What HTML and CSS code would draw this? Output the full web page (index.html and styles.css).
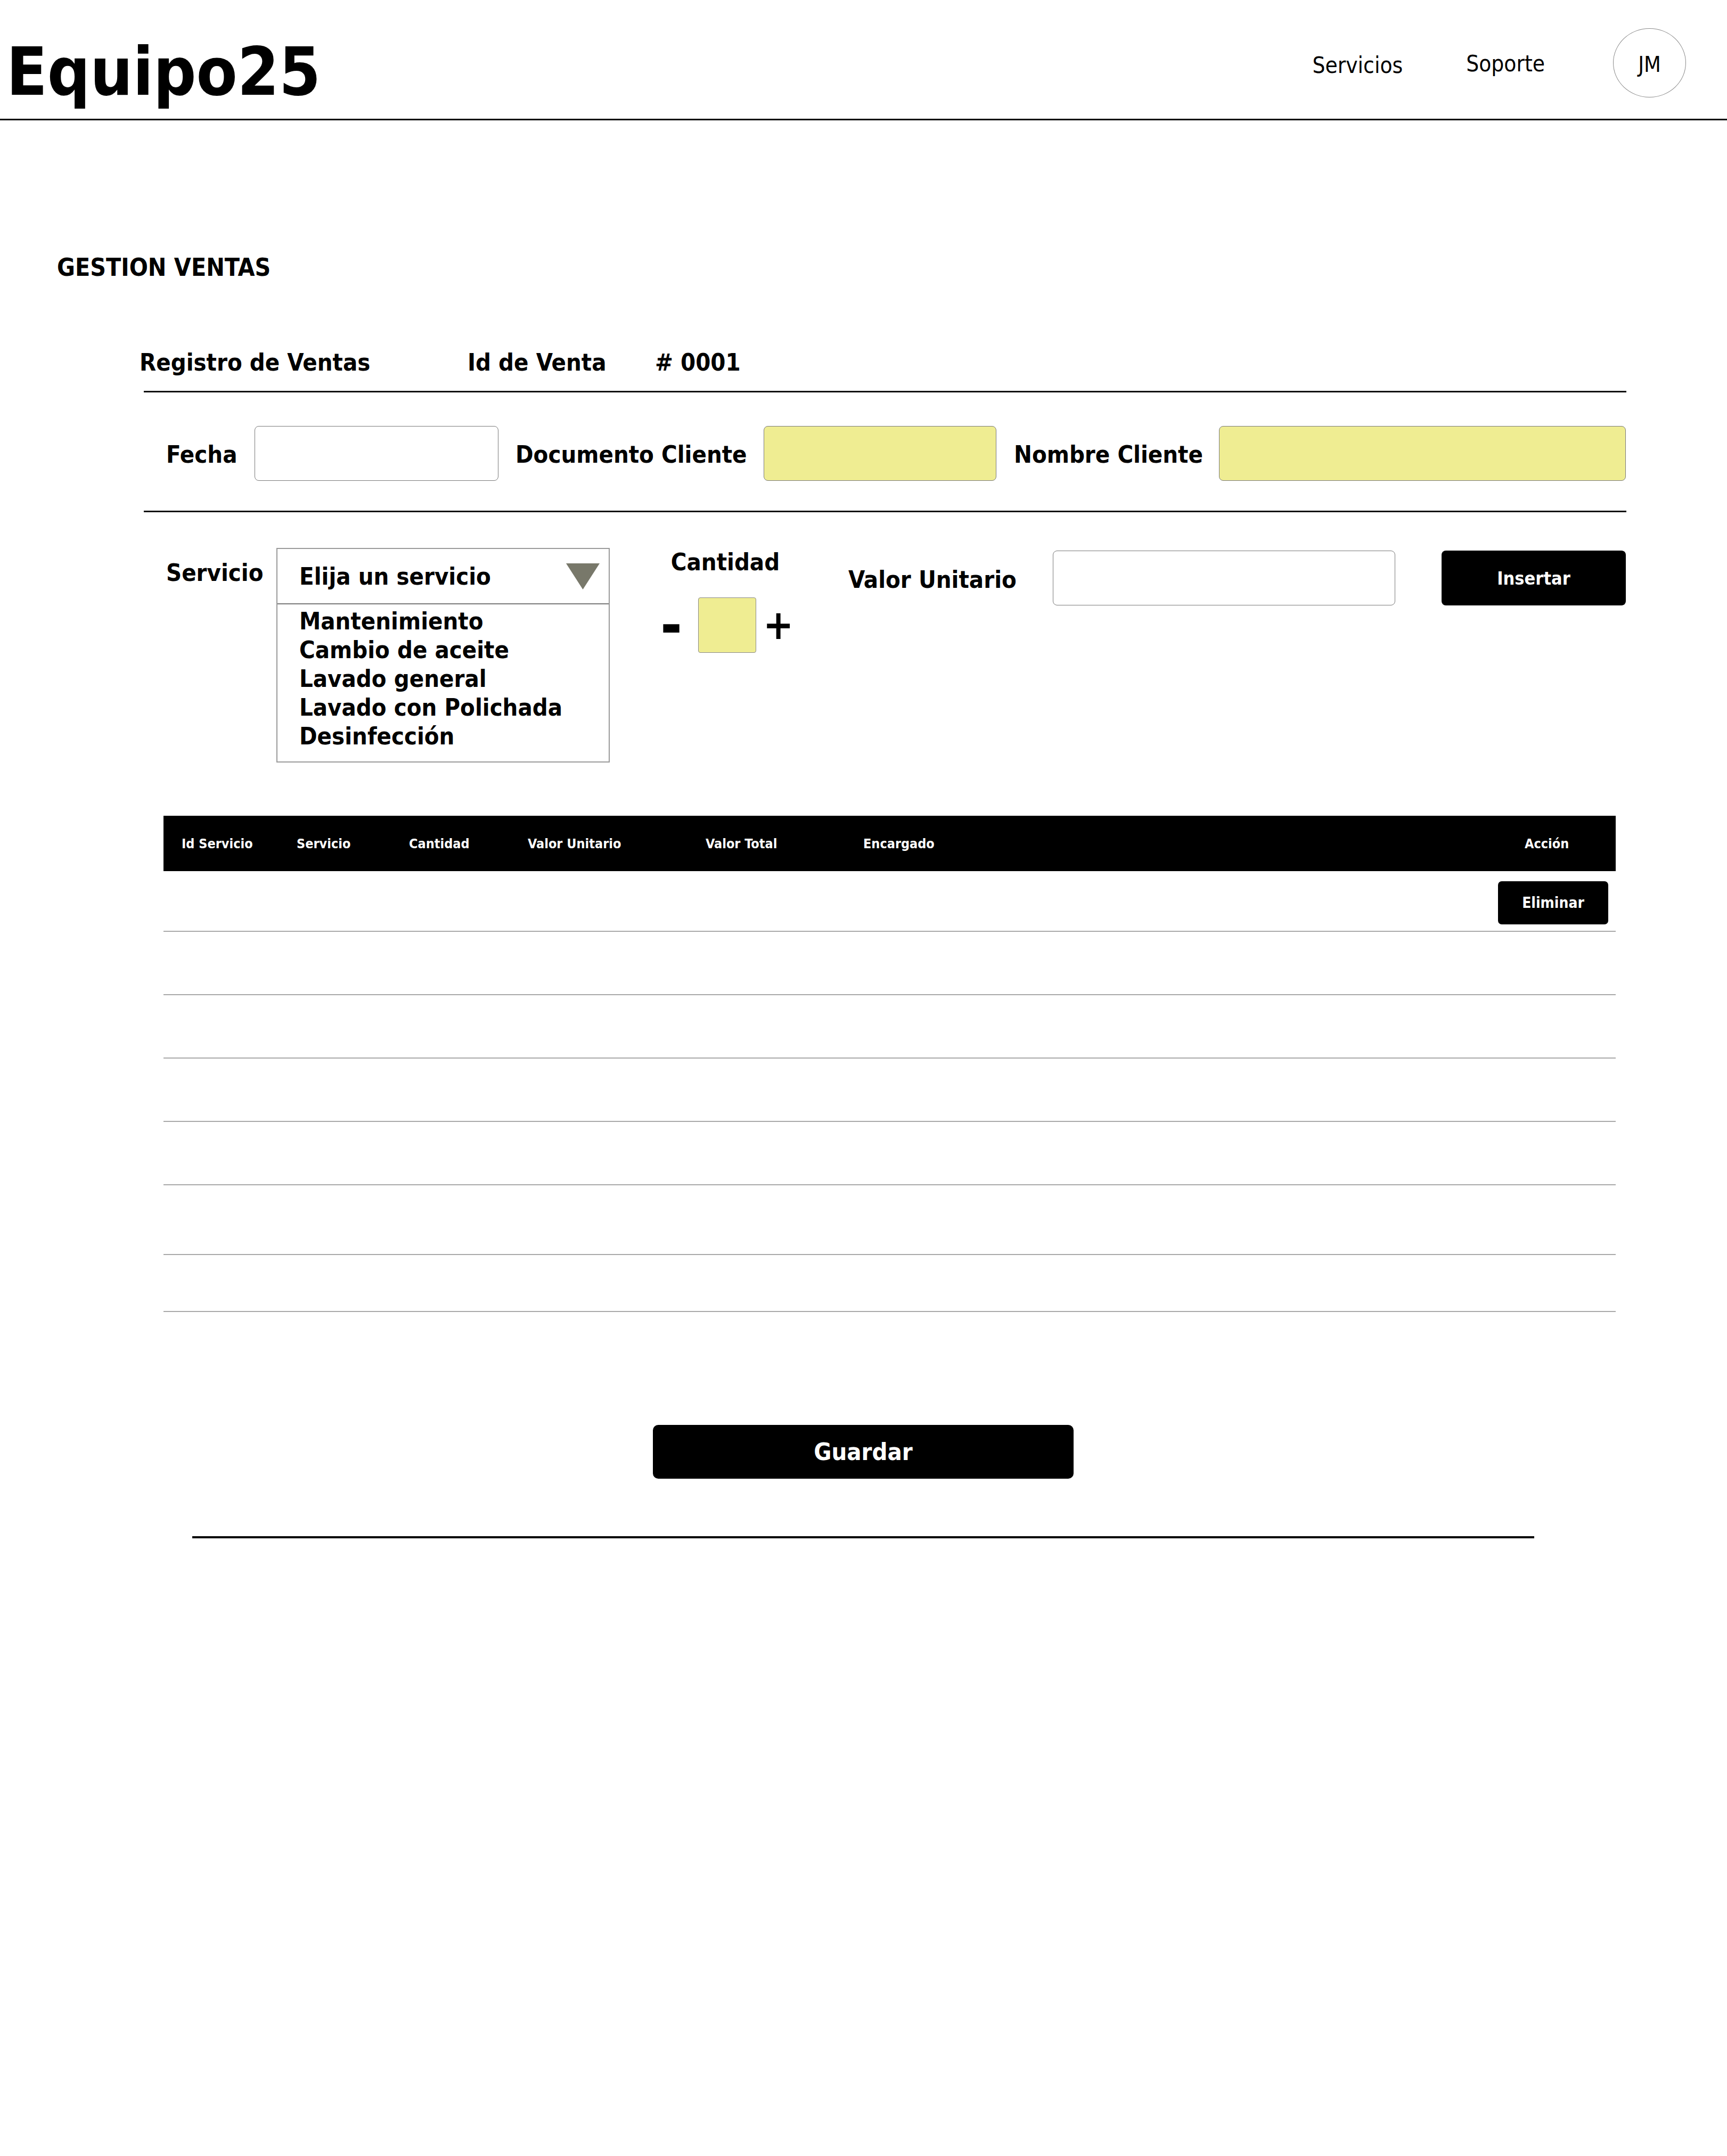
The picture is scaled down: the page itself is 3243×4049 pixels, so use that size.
FILE: index.html
```html
<!DOCTYPE html>
<html lang="es">
<head>
<meta charset="utf-8">
<title>Equipo25 - Gestion Ventas</title>
<link rel="stylesheet" href="styles.css">
</head>
<body>
<header class="topbar">
  <div class="logo">Equipo25</div>
  <nav class="nav">
    <a class="nav-link nav-servicios">Servicios</a>
    <a class="nav-link nav-soporte">Soporte</a>
    <div class="avatar">JM</div>
  </nav>
</header>
<main class="content">
  <h1 class="page-title">GESTION VENTAS</h1>
  <section class="card">
    <div class="card-head">
      <span>Registro de Ventas</span>
      <span>Id de Venta</span>
      <span># 0001</span>
    </div>
    <hr class="rule">
    <div class="row-client">
      <label class="label lbl-fecha">Fecha</label>
      <input class="field field-fecha" type="text">
      <label class="label lbl-doc">Documento Cliente</label>
      <input class="field field-doc" type="text">
      <label class="label lbl-nombre">Nombre Cliente</label>
      <input class="field field-nombre" type="text">
    </div>
    <hr class="rule rule-2">
    <div class="row-service">
      <label class="label lbl-servicio">Servicio</label>
      <div class="select">
        <div class="select-head">
          <span>Elija un servicio</span>
          <svg class="caret" viewBox="0 0 63 49"><polygon points="0,0 63,0 31.5,49" fill="#78786a"/></svg>
        </div>
        <ul class="options">
          <li>Mantenimiento</li>
          <li>Cambio de aceite</li>
          <li>Lavado general</li>
          <li>Lavado con Polichada</li>
          <li>Desinfección</li>
        </ul>
      </div>
      <div class="qty-group">
        <div class="label qty-title">Cantidad</div>
        <div class="qty-row">
          <span class="qty-minus">-</span>
          <div class="qty-box"></div>
          <span class="qty-plus">+</span>
        </div>
      </div>
      <label class="label lbl-valor">Valor Unitario</label>
      <input class="field field-valor" type="text">
      <button class="btn-insert">Insertar</button>
    </div>
    <div class="table">
      <div class="t-head">
        <span>Id Servicio</span>
        <span>Servicio</span>
        <span>Cantidad</span>
        <span>Valor Unitario</span>
        <span>Valor Total</span>
        <span>Encargado</span>
        <span>Acción</span>
      </div>
      <div class="t-body">
        <div class="t-row">
          <div class="t-action"><button class="btn-delete">Eliminar</button></div>
        </div>
        <div class="t-row"></div>
        <div class="t-row"></div>
        <div class="t-row"></div>
        <div class="t-row"></div>
        <div class="t-row"></div>
        <div class="t-row"></div>
      </div>
    </div>
    <button class="btn-save">Guardar</button>
    <hr class="rule-bottom">
  </section>
</main>
</body>
</html>
```

FILE: styles.css
```css
* { box-sizing: border-box; }

body {
  margin: 0;
  font-family: "DejaVu Sans Condensed", "DejaVu Sans", sans-serif;
  font-stretch: condensed;
  color: #000;
  background: #fff;
}

/* ---------- header ---------- */
.topbar {
  display: flex;
  align-items: flex-start;
  height: 226px;
  border-bottom: 3px solid #000;
}
.logo {
  margin: 72px 0 0 12px;
  font-size: 125px;
  line-height: 125px;
  font-weight: 700;
}
.nav {
  margin-left: auto;
  margin-right: 77px;
  display: flex;
  align-items: flex-start;
}
.nav-link {
  font-size: 42px;
  line-height: 42px;
  color: #000;
}
.nav-servicios { margin-top: 102px; }
.nav-soporte { margin-top: 99px; margin-left: 119px; }
.avatar {
  margin-top: 53px;
  margin-left: 128px;
  width: 137px;
  height: 130px;
  border: 1px solid #8a8a8a;
  border-radius: 50%;
  display: flex;
  align-items: center;
  justify-content: center;
  padding-top: 6px;
  font-size: 41px;
  line-height: 41px;
}

/* ---------- page ---------- */
.page-title {
  margin: 254px 0 0 107px;
  font-size: 46px;
  line-height: 45px;
  font-weight: 700;
}
.card {
  margin-left: 262px;
  width: 2792px;
}
.card-head {
  margin-top: 133px;
  display: grid;
  grid-template-columns: 616px 352px auto;
  font-size: 45px;
  line-height: 45px;
  font-weight: 700;
}
.rule {
  margin: 31px 0 0 8px;
  height: 0;
  border: 0;
  border-top: 3px solid #111;
}
.rule-2 { margin-top: 56px; }

.label {
  flex: none;
  font-size: 45px;
  line-height: 45px;
  font-weight: 700;
}
.field {
  flex: none;
  height: 103px;
  border: 1px solid #7b7b7b;
  border-radius: 8px;
  background: #fff;
}

.row-client {
  margin-top: 63px;
  height: 103px;
  display: flex;
  align-items: center;
  padding-left: 50px;
}
.row-client .label { margin-top: 4px; }
.lbl-fecha { width: 166px; }
.field-fecha { width: 458px; }
.lbl-doc { margin-left: 32px; width: 466px; }
.field-doc { width: 437px; background: #efed92; }
.lbl-nombre { margin-left: 33px; width: 385px; }
.field-nombre { width: 764px; background: #efed92; }

/* ---------- service row ---------- */
.row-service {
  margin-top: 67px;
  display: flex;
  align-items: flex-start;
  padding-left: 50px;
}
.lbl-servicio { margin-top: 24px; width: 207px; }
.select {
  flex: none;
  width: 626px;
  height: 403px;
  border: 2px solid #9a9a9a;
}
.select-head {
  height: 104px;
  border-bottom: 2px solid #7a7a7a;
  display: flex;
  align-items: center;
  justify-content: space-between;
  padding: 0 17px 0 41px;
  font-size: 45px;
  line-height: 45px;
  font-weight: 700;
}
.caret { width: 63px; height: 49px; }
.options {
  list-style: none;
  margin: 0;
  padding: 5px 0 0 41px;
  font-size: 45px;
  line-height: 54px;
  font-weight: 700;
}

.qty-group {
  flex: none;
  margin-left: 100px;
  width: 240px;
  display: flex;
  flex-direction: column;
  align-items: center;
}
.qty-title { margin-top: 4px; margin-left: -6px; }
.qty-row {
  align-self: flex-start;
  margin-top: 44px;
  margin-left: -5px;
  display: flex;
  align-items: center;
}
.qty-minus {
  font-size: 110px;
  line-height: 104px;
  font-weight: 700;
  margin-right: 30px;
}
.qty-box {
  width: 109px;
  height: 104px;
  border: 1px solid #8a8a8a;
  border-radius: 4px;
  background: #efed92;
}
.qty-plus {
  font-size: 76px;
  line-height: 76px;
  font-weight: 700;
  margin-left: 13px;
}

.lbl-valor { margin-left: 108px; margin-top: 37px; width: 384px; }
.field-valor { margin-top: 5px; width: 643px; }
.btn-insert {
  flex: none;
  margin: 5px 0 0 87px;
  width: 346px;
  height: 103px;
  border: 0;
  border-radius: 8px;
  background: #000;
  color: #fff;
  font-family: inherit;
  font-stretch: condensed;
  font-size: 34px;
  font-weight: 700;
}

/* ---------- table ---------- */
.table {
  margin: 100px 0 0 45px;
  width: 2727px;
}
.t-head,
.t-row {
  display: grid;
  grid-template-columns: 250px 211px 223px 334px 296px 1242px 171px;
}
.t-head {
  height: 104px;
  background: #000;
  color: #fff;
  align-items: center;
  font-size: 25px;
  font-weight: 700;
}
.t-head span:first-child { padding-left: 34px; }
.t-row {
  height: 119px;
  border-bottom: 2px solid #a9a9a9;
}
.t-body .t-row:nth-child(1) { height: 114px; }
.t-body .t-row:nth-child(6) { height: 131px; }
.t-body .t-row:nth-child(7) { height: 107px; }
.t-action {
  grid-column: 6 / 8;
  display: flex;
  justify-content: flex-end;
  align-items: flex-start;
  padding: 19px 14px 0 0;
}
.btn-delete {
  width: 207px;
  height: 81px;
  border: 0;
  border-radius: 7px;
  background: #000;
  color: #fff;
  font-family: inherit;
  font-stretch: condensed;
  font-size: 28px;
  font-weight: 700;
}

/* ---------- footer actions ---------- */
.btn-save {
  display: block;
  margin: 212px 0 0 964px;
  width: 790px;
  height: 101px;
  border: 0;
  border-radius: 10px;
  background: #000;
  color: #fff;
  font-family: inherit;
  font-stretch: condensed;
  font-size: 45px;
  font-weight: 700;
}
.rule-bottom {
  margin: 108px 0 0 99px;
  width: 2520px;
  height: 0;
  border: 0;
  border-top: 4px solid #000;
}
```
